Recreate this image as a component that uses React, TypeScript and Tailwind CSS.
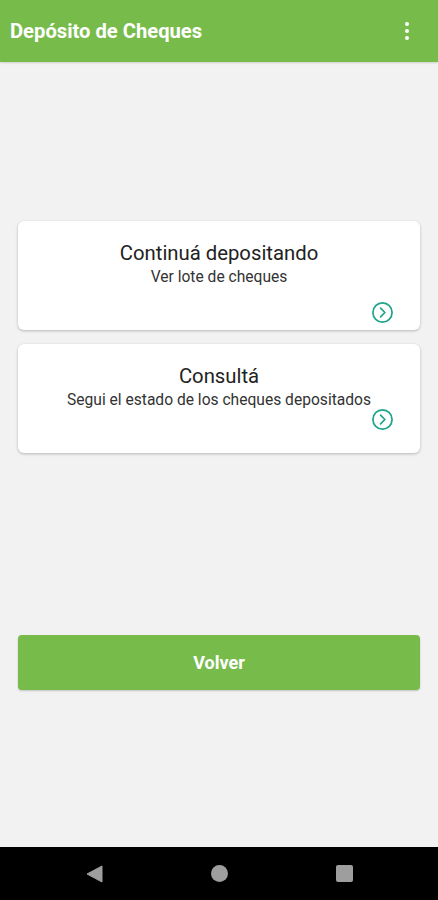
import React from 'react'

const ChevronCircle = () => (
  <svg width="23" height="23" viewBox="0 0 24 24" fill="none" stroke="#1fa58a" strokeWidth="1.8" strokeLinecap="round" strokeLinejoin="round">
    <circle cx="12" cy="12" r="10" />
    <path d="M10 7.5l4.5 4.5-4.5 4.5" />
  </svg>
)

const OptionCard: React.FC<{ title: string; subtitle: string; iconTop: string }> = ({ title, subtitle, iconTop }) => (
  <div className="relative h-[109px] rounded-[6px] bg-white shadow-[0_1px_3px_rgba(0,0,0,0.25)]">
    <div className="flex flex-col items-center pt-[19px]">
      <div className="text-[20.3px] leading-[27px] text-[#222]">{title}</div>
      <div className="text-[15.6px] leading-[20px] text-[#333]">{subtitle}</div>
    </div>
    <div className={`absolute right-[26px] ${iconTop}`}>
      <ChevronCircle />
    </div>
  </div>
)

export default function App() {
  return (
    <div className="flex h-[900px] w-[438px] flex-col bg-[#f2f2f2]" style={{ fontFamily: 'Roboto, "Liberation Sans", sans-serif' }}>
      <div className="flex h-[62px] items-center justify-between bg-[#77bc4b] pl-[10px] pr-[29px] shadow-[0_1px_2px_rgba(0,0,0,0.15)]">
        <h1 className="text-[20.2px] font-bold text-white">Depósito de Cheques</h1>
        <div className="flex flex-col gap-[3px]">
          <span className="h-[4px] w-[4px] rounded-full bg-white" />
          <span className="h-[4px] w-[4px] rounded-full bg-white" />
          <span className="h-[4px] w-[4px] rounded-full bg-white" />
        </div>
      </div>

      <div className="flex flex-1 flex-col px-[18px]">
        <div className="mt-[159px] flex flex-col gap-[14px]">
          <OptionCard title="Continuá depositando" subtitle="Ver lote de cheques" iconTop="top-[80px]" />
          <OptionCard title="Consultá" subtitle="Segui el estado de los cheques depositados" iconTop="top-[64px]" />
        </div>

        <button className="mt-[182px] h-[55px] rounded-[4px] bg-[#77bc4b] text-[18px] font-bold text-white shadow-[0_1px_2px_rgba(0,0,0,0.2)]">
          Volver
        </button>
      </div>

      <div className="flex h-[53px] items-center justify-center gap-[108px] bg-black">
        <svg width="17" height="18" viewBox="0 0 17 18"><path d="M16 1v16L1 9z" fill="#9e9e9e" strokeLinejoin="round" stroke="#9e9e9e" strokeWidth="1" /></svg>
        <span className="h-[17px] w-[17px] rounded-full bg-[#9e9e9e]" />
        <span className="h-[17px] w-[17px] rounded-[2px] bg-[#9e9e9e]" />
      </div>
    </div>
  )
}
